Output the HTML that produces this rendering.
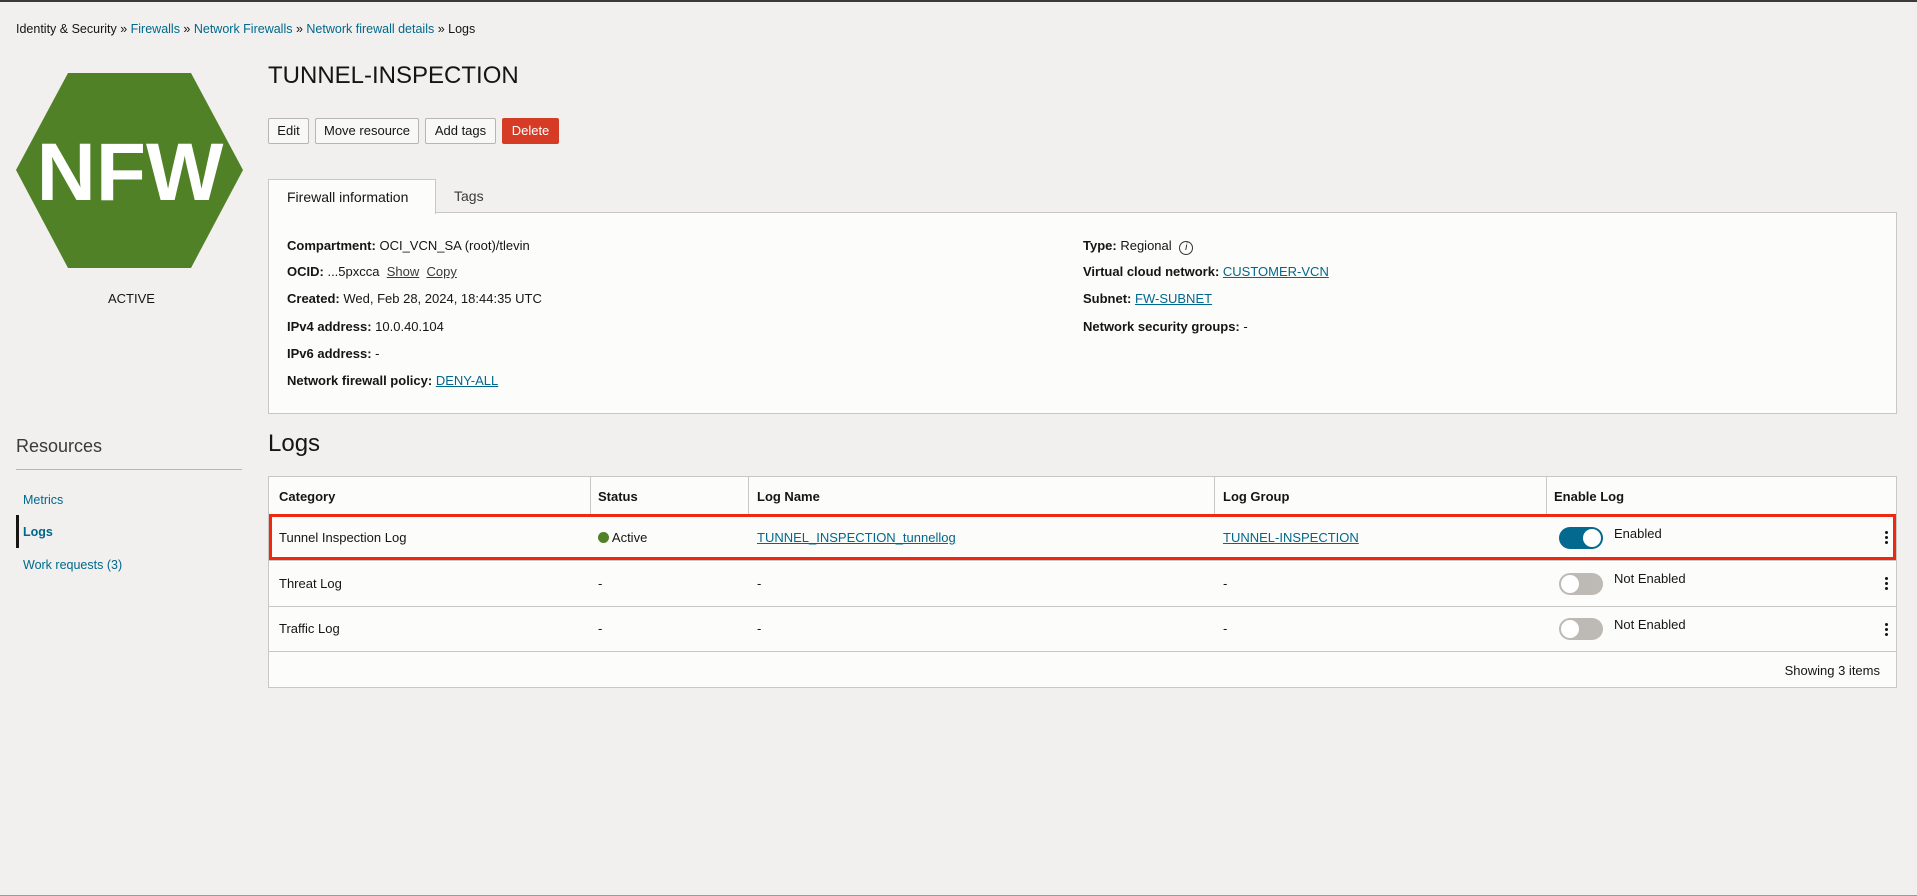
<!DOCTYPE html>
<html><head><meta charset="utf-8"><style>
*{box-sizing:border-box;margin:0;padding:0}
body{width:1917px;height:896px;background:#f1f0ee;font-family:"Liberation Sans",sans-serif;color:#161513;font-size:13px;position:relative;overflow:hidden;border-top:2px solid #3a3a3a}
.a{position:absolute;white-space:nowrap}
.lk{color:#00688c}
.u{text-decoration:underline;color:#00688c}
.btn{position:absolute;top:116px;height:26px;border:1px solid #b8b6b2;background:#f8f8f7;border-radius:2px;font-size:13px;line-height:24px;text-align:center}
.panel{position:absolute;background:#fcfcfb;border:1px solid #c9c7c3}
b{font-weight:bold}
.th{font-weight:bold}
.vl{position:absolute;top:0;width:1px;height:38px;background:#c9c7c3}
.hl{position:absolute;left:0;width:100%;height:1px;background:#c9c7c3}
.tg{position:absolute;width:44px;height:22px;border-radius:11px}
.tg i{position:absolute;top:2px;width:18px;height:18px;border-radius:50%;background:#fff}
.kb{position:absolute;left:1616px;width:3px}
.kb i{display:block;width:3px;height:3px;background:#161513;border-radius:50%;margin-bottom:2px}
</style></head><body>
<div class="a" style="left:16px;top:20px;font-size:12.5px">Identity &amp; Security » <span class="lk">Firewalls</span> » <span class="lk">Network Firewalls</span> » <span class="lk">Network firewall details</span> » Logs</div>

<svg class="a" style="left:16px;top:71px" width="227" height="195" viewBox="0 0 227 195"><polygon points="52,0 175,0 227,97 175,195 52,195 0,97" fill="#518126"/><text x="114" y="127" text-anchor="middle" font-family="Liberation Sans" font-weight="bold" font-size="82" fill="#fff">NFW</text></svg>
<div class="a" style="left:108px;top:289px">ACTIVE</div>

<div class="a" style="left:268px;top:60px;font-size:24px">TUNNEL-INSPECTION</div>
<div class="btn" style="left:268px;width:41px">Edit</div>
<div class="btn" style="left:315px;width:104px">Move resource</div>
<div class="btn" style="left:425px;width:71px">Add tags</div>
<div class="btn" style="left:502px;width:57px;background:#d63b25;border-color:#d63b25;color:#fff">Delete</div>

<div class="panel" style="left:268px;top:210px;width:1629px;height:202px"></div>
<div class="a" style="left:268px;top:177px;width:168px;height:35px;background:#fcfcfb;border:1px solid #c9c7c3;border-bottom:none;font-size:14px;padding:9px 0 0 18px">Firewall information</div>
<div class="a" style="left:454px;top:186px;font-size:14px;color:#3a3a3a">Tags</div>

<div class="a" style="left:287px;top:236px"><b>Compartment:</b> OCI_VCN_SA (root)/tlevin</div>
<div class="a" style="left:287px;top:262px"><b>OCID:</b> ...5pxcca &nbsp;<span style="text-decoration:underline;color:#3a3a3a">Show</span> &nbsp;<span style="text-decoration:underline;color:#3a3a3a">Copy</span></div>
<div class="a" style="left:287px;top:289px"><b>Created:</b> Wed, Feb 28, 2024, 18:44:35 UTC</div>
<div class="a" style="left:287px;top:317px"><b>IPv4 address:</b> 10.0.40.104</div>
<div class="a" style="left:287px;top:344px"><b>IPv6 address:</b> -</div>
<div class="a" style="left:287px;top:371px"><b>Network firewall policy:</b> <span class="u">DENY-ALL</span></div>
<div class="a" style="left:1083px;top:236px"><b>Type:</b> Regional <span style="display:inline-block;width:14px;height:14px;border:1px solid #333;border-radius:50%;font-size:10px;line-height:12px;text-align:center;font-style:italic;margin-left:4px">i</span></div>
<div class="a" style="left:1083px;top:262px"><b>Virtual cloud network:</b> <span class="u">CUSTOMER-VCN</span></div>
<div class="a" style="left:1083px;top:289px"><b>Subnet:</b> <span class="u">FW-SUBNET</span></div>
<div class="a" style="left:1083px;top:317px"><b>Network security groups:</b> -</div>

<div class="a" style="left:16px;top:434px;font-size:18px;color:#3a3a3a">Resources</div>
<div class="a" style="left:16px;top:467px;width:226px;height:1px;background:#b8b6b2"></div>
<div class="a lk" style="left:23px;top:491px;font-size:12.5px">Metrics</div>
<div class="a" style="left:16px;top:513px;width:3px;height:33px;background:#161513"></div>
<div class="a" style="left:23px;top:523px;font-size:12.5px;font-weight:bold;color:#00688c">Logs</div>
<div class="a lk" style="left:23px;top:556px;font-size:12.5px">Work requests (3)</div>

<div class="a" style="left:268px;top:428px;font-size:24px">Logs</div>
<div class="panel" style="left:268px;top:474px;width:1629px;height:212px">
 <div class="vl" style="left:321px"></div><div class="vl" style="left:479px"></div><div class="vl" style="left:945px"></div><div class="vl" style="left:1277px"></div>
 <div class="hl" style="top:38px"></div><div class="hl" style="top:83px"></div><div class="hl" style="top:129px"></div><div class="hl" style="top:174px"></div>
 <div class="a th" style="left:10px;top:12px">Category</div>
 <div class="a th" style="left:329px;top:12px">Status</div>
 <div class="a th" style="left:488px;top:12px">Log Name</div>
 <div class="a th" style="left:954px;top:12px">Log Group</div>
 <div class="a th" style="left:1285px;top:12px">Enable Log</div>

 <div class="a" style="left:10px;top:53px">Tunnel Inspection Log</div>
 <div class="a" style="left:329px;top:53px"><span style="display:inline-block;width:11px;height:11px;border-radius:50%;background:#518126;vertical-align:-1px"></span> Active</div>
 <div class="a u" style="left:488px;top:53px">TUNNEL_INSPECTION_tunnellog</div>
 <div class="a u" style="left:954px;top:53px">TUNNEL-INSPECTION</div>
 <div class="tg" style="left:1290px;top:50px;background:#04698e"><i style="left:24px"></i></div>
 <div class="a" style="left:1345px;top:49px">Enabled</div>
 <div class="kb" style="top:54px"><i></i><i></i><i></i></div>

 <div class="a" style="left:10px;top:99px">Threat Log</div>
 <div class="a" style="left:329px;top:99px">-</div><div class="a" style="left:488px;top:99px">-</div><div class="a" style="left:954px;top:99px">-</div>
 <div class="tg" style="left:1290px;top:96px;background:#bdb9b4"><i style="left:2px"></i></div>
 <div class="a" style="left:1345px;top:94px">Not Enabled</div>
 <div class="kb" style="top:100px"><i></i><i></i><i></i></div>

 <div class="a" style="left:10px;top:144px">Traffic Log</div>
 <div class="a" style="left:329px;top:144px">-</div><div class="a" style="left:488px;top:144px">-</div><div class="a" style="left:954px;top:144px">-</div>
 <div class="tg" style="left:1290px;top:141px;background:#bdb9b4"><i style="left:2px"></i></div>
 <div class="a" style="left:1345px;top:140px">Not Enabled</div>
 <div class="kb" style="top:146px"><i></i><i></i><i></i></div>

 <div class="a" style="right:16px;top:186px">Showing 3 items</div>
</div>
<div class="a" style="left:269px;top:512px;width:1627px;height:46px;border:3px solid #f0280f"></div>
<div class="a" style="left:0;top:893px;width:1917px;height:1px;background:#9a9a9a"></div>
</body></html>
